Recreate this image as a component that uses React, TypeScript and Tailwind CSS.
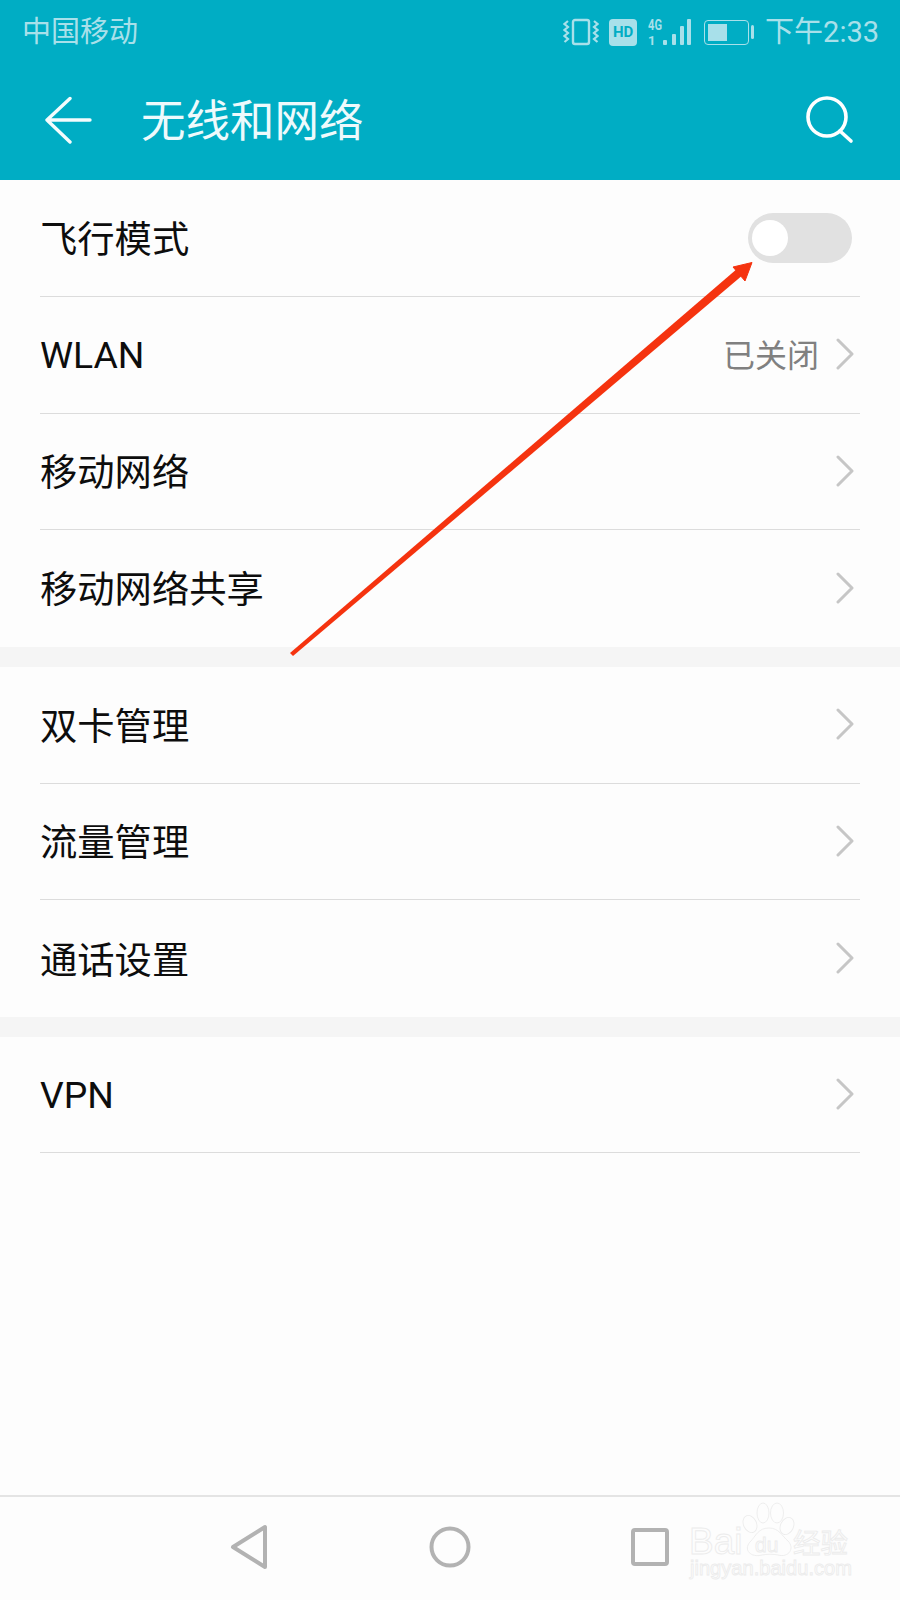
const fontStack = "font-['Roboto','Noto_Sans_CJK_SC',sans-serif]";

interface RowProps {
  label: string;
  latin?: boolean;
  value?: string;
  toggle?: boolean;
  last?: boolean;
}

function Row({ label, latin, value, toggle, last }: RowProps) {
  return (
    <div className="flex-1 ml-10 mr-10">
      <div
        className={`h-full flex items-center justify-between ${
          last ? "" : "border-b border-[#dcdcdc]"
        }`}
      >
        <span className={`text-[37.3px] leading-none text-[#0d0d0d] ${latin ? "pt-[2px]" : "pt-[5px]"}`}>
          {label}
        </span>
        {toggle ? (
          <div className="w-[104px] h-[50px] rounded-full bg-[#e1e1e1] mr-2 flex items-center pl-1">
            <div className="w-[36px] h-[36px] rounded-full bg-white" />
          </div>
        ) : (
          <div className="flex items-center">
            {value && (
              <span className="text-[32px] leading-none text-[#808080] mr-[17px] pt-[2px]">{value}</span>
            )}
            <svg width="18" height="32" viewBox="0 0 18 32" fill="none" className="mr-[6px] mb-[1px]">
              <path d="M2 2 L16 16 L2 30" stroke="#c6c6c6" strokeWidth="3" strokeLinecap="round" strokeLinejoin="round" />
            </svg>
          </div>
        )}
      </div>
    </div>
  );
}

function StatusIcons() {
  return (
    <div className="flex items-center">
      {/* vibrate */}
      <svg width="36" height="30" viewBox="0 0 36 30" fill="none" stroke="#a8e0ea" strokeWidth="2.2">
        <rect x="10" y="3" width="16" height="24" rx="2" strokeWidth="2.4" />
        <path d="M5 4 L1.5 7 L5 10 L1.5 13 L5 16 L1.5 19 L5 22 L1.5 25" />
        <path d="M31 4 L34.5 7 L31 10 L34.5 13 L31 16 L34.5 19 L31 22 L34.5 25" />
      </svg>
      {/* HD */}
      <div className="ml-[10px] w-[28px] h-[27px] rounded-[4px] bg-[#a8e0ea] flex items-center justify-center text-[15px] font-bold leading-none text-[#00adc4] font-['Roboto',sans-serif]">
        HD
      </div>
      {/* signal */}
      <svg width="44" height="30" viewBox="0 0 44 30" className="ml-[11px]" fill="#a8e0ea">
        <text x="0" y="13" fontSize="15" fontWeight="700" fontFamily="Roboto, sans-serif" textLength="14" lengthAdjust="spacingAndGlyphs">4G</text>
        <text x="0" y="28" fontSize="13" fontWeight="700" fontFamily="Roboto, sans-serif">1</text>
        <rect x="15" y="23" width="4" height="5" rx="1" />
        <rect x="24" y="17" width="4" height="11" rx="1" />
        <rect x="32" y="9" width="4" height="19" rx="1" />
        <rect x="39" y="2" width="4" height="26" rx="1" />
      </svg>
      {/* battery */}
      <div className="ml-[12px] flex items-center">
        <div className="w-[45px] h-[25px] rounded-[4px] border-[1.5px] border-[#a8e0ea] p-[3px]">
          <div className="w-[19px] h-full bg-[#a8e0ea]" />
        </div>
        <div className="ml-[2px] w-[3px] h-[14px] rounded-sm bg-[#a8e0ea]" />
      </div>
      <span className="ml-[11px] text-[29px] leading-none text-[#a8e0ea]">下午2:33</span>
    </div>
  );
}

function BaiduMark() {
  return (
    <svg width="172" height="92" viewBox="0 0 172 92" className="absolute left-[688px] top-[1500px]" fill="#fdfdfd" stroke="#ececec" strokeWidth="0.9">
      <ellipse cx="62" cy="24" rx="6.5" ry="9" transform="rotate(-25 62 24)" />
      <ellipse cx="75" cy="13" rx="6" ry="10" />
      <ellipse cx="89" cy="13" rx="6.5" ry="10" />
      <ellipse cx="99" cy="26" rx="6.5" ry="9" transform="rotate(25 99 26)" />
      <path d="M81 28 C70 28 68 36 62 42 C55 50 63 58 74 55 C79 54 85 54 90 55 C101 58 107 48 100 41 C94 36 91 28 81 28 Z" />
      <text x="1" y="54" fontSize="37" fontFamily="Liberation Sans, sans-serif">Bai</text>
      <text x="67" y="52" fontSize="21" fontFamily="Liberation Sans, sans-serif">du</text>
      <text x="105" y="53" fontSize="27.5" fontFamily="Noto Sans CJK SC, sans-serif">经验</text>
      <text x="2" y="75" fontSize="21" fontFamily="Liberation Sans, sans-serif" textLength="162" lengthAdjust="spacingAndGlyphs">jingyan.baidu.com</text>
    </svg>
  );
}

export default function App() {
  return (
    <div className={`relative w-[900px] h-[1600px] bg-[#fdfdfd] flex flex-col overflow-hidden ${fontStack}`}>
      {/* Header */}
      <div className="h-[180px] shrink-0 bg-[#00adc4] flex flex-col">
        <div className="h-[62px] pl-[22px] pr-[21px] pt-[2px] flex items-center justify-between">
          <span className="text-[29px] leading-none text-[#a8e0ea]">中国移动</span>
          <StatusIcons />
        </div>
        <div className="flex-1 flex items-center pl-[44px] pr-[60px] pb-[2px]">
          <svg width="50" height="48" viewBox="0 0 50 48" fill="none" stroke="#f4fcfd" strokeWidth="3.4" strokeLinecap="round" strokeLinejoin="round">
            <path d="M26 2.5 L3 24 L26 46 M3 24 H46" />
          </svg>
          <span className="ml-[47px] pt-[5px] text-[44.5px] leading-none text-[#eefafc]">无线和网络</span>
          <svg width="50" height="50" viewBox="0 0 50 50" fill="none" stroke="white" strokeWidth="3.6" strokeLinecap="round" className="ml-auto mr-[-15px]">
            <circle cx="22" cy="22" r="19" />
            <path d="M35 36 L46 46" />
          </svg>
        </div>
      </div>

      {/* Settings groups */}
      <div className="h-[467px] flex flex-col">
        <Row label="飞行模式" toggle />
        <Row label="WLAN" latin value="已关闭" />
        <Row label="移动网络" />
        <Row label="移动网络共享" last />
      </div>
      <div className="h-[20px] bg-[#f5f5f5]" />
      <div className="h-[350px] flex flex-col">
        <Row label="双卡管理" />
        <Row label="流量管理" />
        <Row label="通话设置" last />
      </div>
      <div className="h-[20px] bg-[#f5f5f5]" />
      <div className="h-[116px] flex flex-col">
        <Row label="VPN" latin />
      </div>

      {/* Nav bar */}
      <div className="mt-auto h-[105px] border-t-2 border-[#e4e4e4] flex items-center pb-[3px]">
        <svg width="40" height="46" viewBox="0 0 40 46" fill="none" stroke="#b2b2b2" strokeWidth="4" strokeLinejoin="round" className="ml-[230px]">
          <path d="M35 3 V43 L3 23 Z" />
        </svg>
        <svg width="42" height="42" viewBox="0 0 42 42" fill="none" stroke="#b2b2b2" strokeWidth="4" className="ml-[159px]">
          <circle cx="21" cy="21" r="18.5" />
        </svg>
        <svg width="38" height="38" viewBox="0 0 38 38" fill="none" stroke="#b2b2b2" strokeWidth="4" strokeLinejoin="round" className="ml-[160px]">
          <rect x="2" y="2" width="34" height="34" rx="2" />
        </svg>
      </div>

      <BaiduMark />

      {/* Red annotation arrow */}
      <svg width="900" height="1600" viewBox="0 0 900 1600" className="absolute inset-0 pointer-events-none" fill="#f5330f">
        <path d="M290 653 L293 656 L744 274 L738 268 Z" strokeLinejoin="round" />
        <path d="M752 262.5 L733 267 L745 281 Z" stroke="#f5330f" strokeWidth="1" strokeLinejoin="round" />
      </svg>
    </div>
  );
}
